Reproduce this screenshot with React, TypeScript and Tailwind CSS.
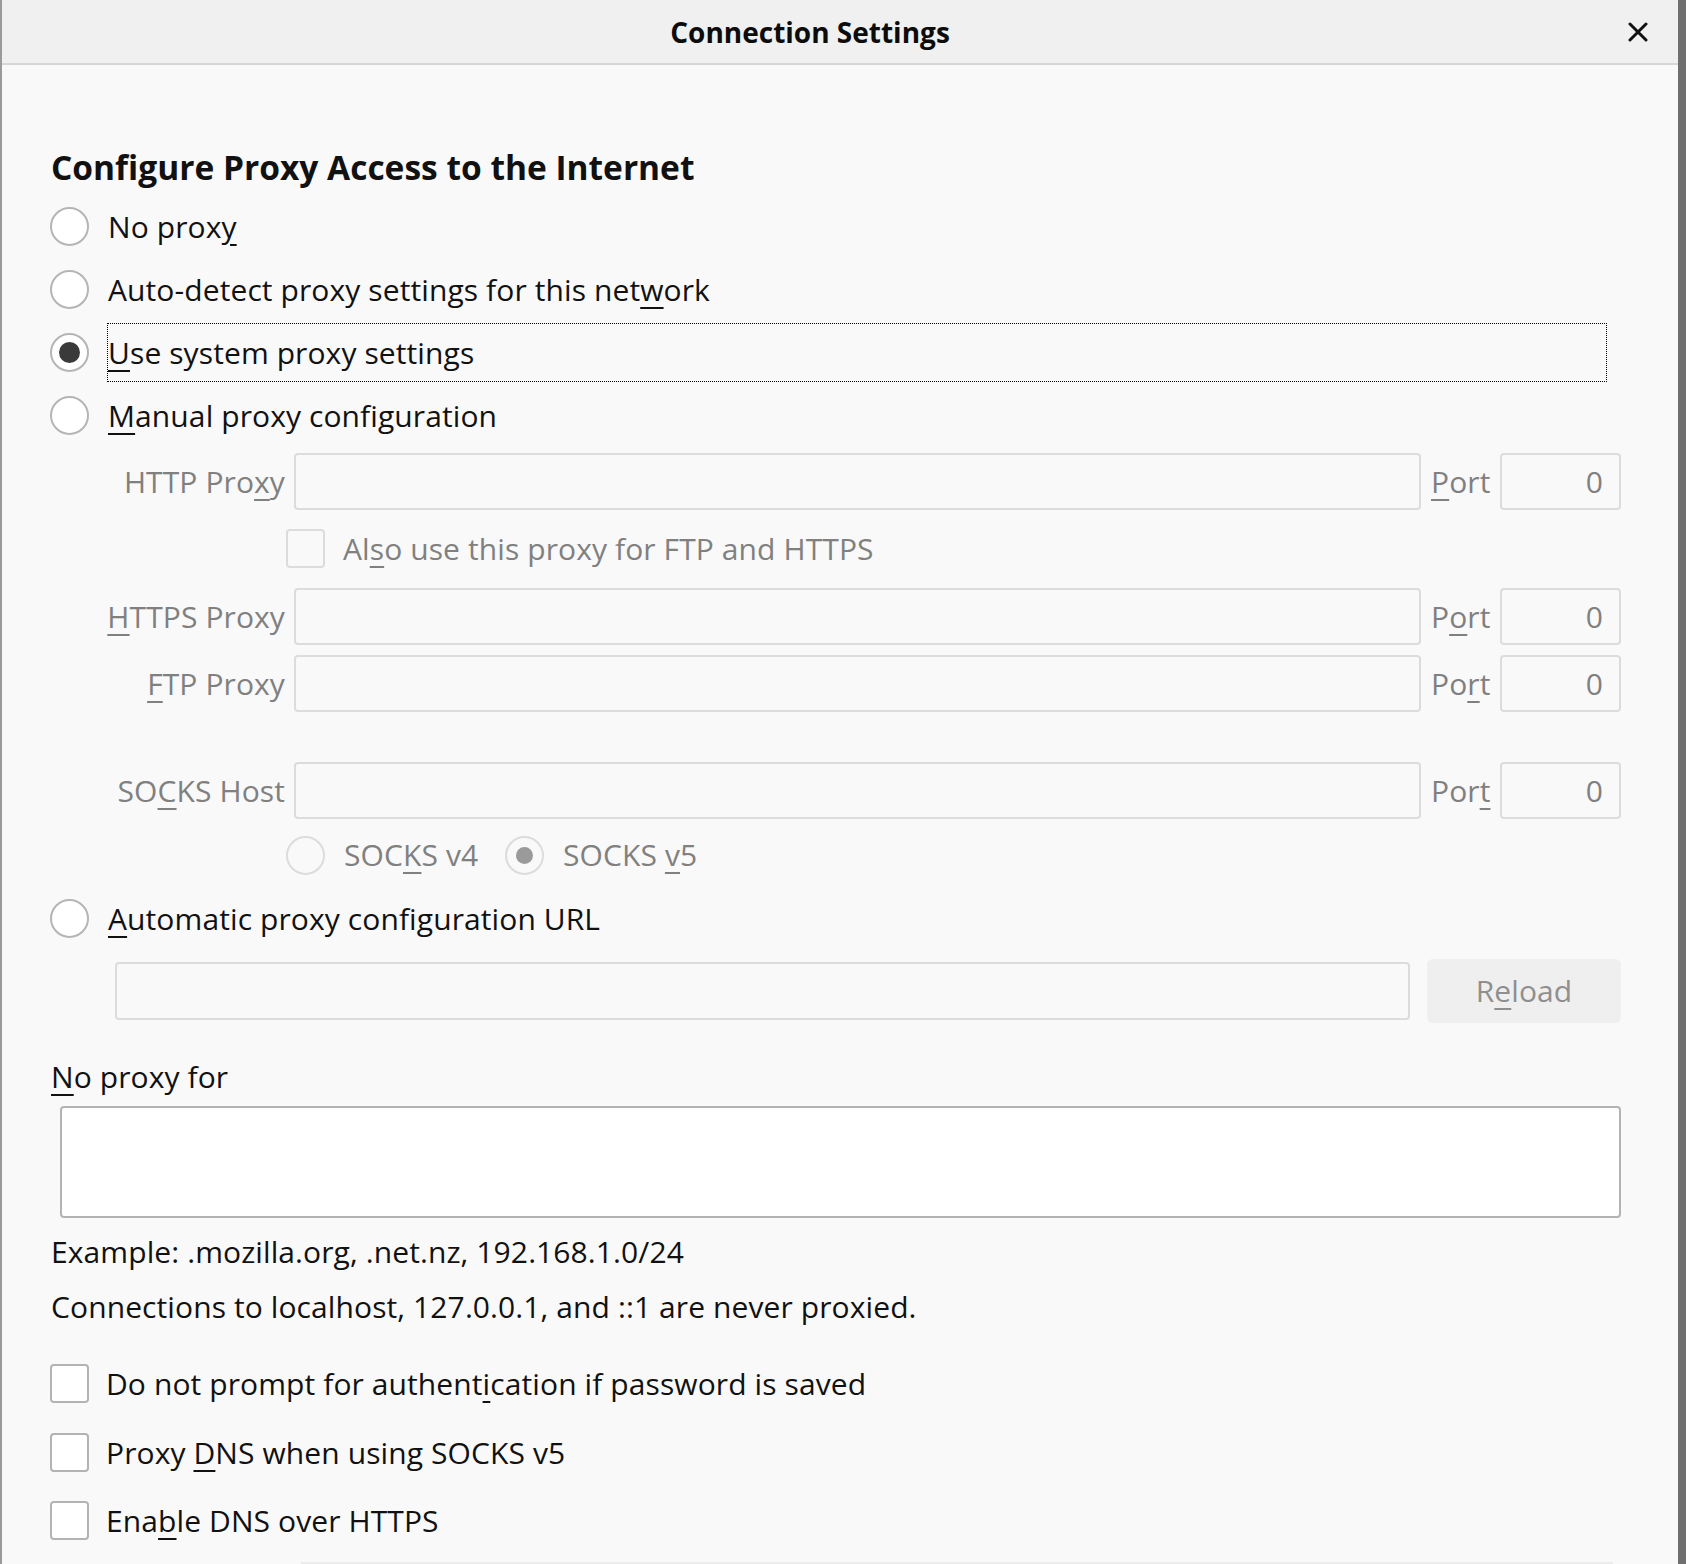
import React from 'react';

const FONT = { fontFamily: '"Open Sans", Lato, "Noto Sans", sans-serif' };

const U: React.FC<{ children: React.ReactNode }> = ({ children }) => (
    <span className="underline decoration-[2px] underline-offset-[6px]">{children}</span>
);

const Radio: React.FC<{ checked?: boolean; disabled?: boolean }> = ({ checked, disabled }) => (
    <span
        className={`flex items-center justify-center w-[39px] h-[39px] shrink-0 rounded-full border-2 ${
            disabled ? 'border-[#dcdcdc] bg-[#f9f9f9]' : 'border-[#b5b5b5] bg-white'
        }`}
    >
        {checked && (
            <span className={`rounded-full ${disabled ? 'w-[17px] h-[17px] bg-[#9a9a9a]' : 'w-[21px] h-[21px] bg-[#3a3a3a]'}`} />
        )}
    </span>
);

const Checkbox: React.FC<{ disabled?: boolean }> = ({ disabled }) => (
    <span
        className={`block w-[39px] h-[39px] shrink-0 rounded-[4px] border-2 ${
            disabled ? 'border-[#dcdcdc] bg-[#f9f9f9]' : 'border-[#b3b3b3] bg-white'
        }`}
    />
);

const Field: React.FC<{ label: React.ReactNode; port: React.ReactNode; className?: string }> = ({ label, port, className }) => (
    <div className={`flex items-center h-[57px] text-[#808080] ${className ?? ''}`}>
        <div className="w-[244px] pr-[9px] text-right whitespace-nowrap">{label}</div>
        <div className="flex-1 h-[57px] rounded-[4px] border-2 border-[#dcdcdc] bg-[#f9f9f9]" />
        <div className="w-[79px] pl-[10px] whitespace-nowrap">{port}</div>
        <div className="w-[121px] h-[57px] rounded-[4px] border-2 border-[#dcdcdc] bg-[#f9f9f9] flex items-center justify-end pr-[16px]">0</div>
    </div>
);

const RadioRow: React.FC<{ children: React.ReactNode; checked?: boolean }> = ({ children, checked }) => (
    <div className="flex items-center h-[63px]">
        <Radio checked={checked} />
        <span className="ml-[19px] whitespace-nowrap">{children}</span>
    </div>
);

const CheckRow: React.FC<{ children: React.ReactNode; className?: string }> = ({ children, className }) => (
    <div className={`flex items-center h-[39px] ${className ?? ''}`}>
        <Checkbox />
        <span className="ml-[17px] whitespace-nowrap">{children}</span>
    </div>
);

export default function App() {
    return (
        <div
            className="flex w-[1686px] h-[1564px] overflow-hidden bg-[#f9f9f9] text-[30px] tracking-[0.1px] leading-[40px] text-[#111]"
            style={FONT}
        >
            <div className="w-[2px] bg-[#9a9a9a]" />
            <div className="flex-1 flex flex-col">
                <div className="flex items-center h-[65px] bg-[#f0f0f0] border-b-2 border-[#d6d5da] shrink-0">
                    <div className="flex-1 flex justify-center pr-[10px]">
                        <span className="text-[28px] tracking-normal font-bold text-[#0c0c0c]">Connection Settings</span>
                    </div>
                    <svg width="20" height="20" viewBox="0 0 20 20" className="mr-[30px]">
                        <path d="M2 2 L18 18 M18 2 L2 18" stroke="#111" strokeWidth="3" strokeLinecap="round" />
                    </svg>
                </div>

                <div className="flex flex-col pl-[48px] pr-[57px]">
                    <h1 className="mt-[82px] h-[40px] text-[33.5px] tracking-normal font-bold pl-[1px] whitespace-nowrap">
                        Configure Proxy Access to the Internet
                    </h1>

                    <div className="mt-[8px]">
                        <RadioRow>No prox<U>y</U></RadioRow>
                        <RadioRow>Auto-detect proxy settings for this net<U>w</U>ork</RadioRow>
                        <div className="flex items-center h-[63px]">
                            <Radio checked />
                            <span className="ml-[18px] mr-[14px] flex-1 flex items-center h-[59px] border border-dotted border-black whitespace-nowrap">
                                <U>U</U>se system proxy settings
                            </span>
                        </div>
                        <RadioRow><U>M</U>anual proxy configuration</RadioRow>
                    </div>

                    <Field className="mt-[6px]" label={<>HTTP Pro<U>x</U>y</>} port={<><U>P</U>ort</>} />
                    <div className="flex items-center h-[39px] mt-[19px] pl-[236px] text-[#808080]">
                        <Checkbox disabled />
                        <span className="ml-[18px] whitespace-nowrap">Al<U>s</U>o use this proxy for FTP and HTTPS</span>
                    </div>
                    <Field className="mt-[20px]" label={<><U>H</U>TTPS Proxy</>} port={<>P<U>o</U>rt</>} />
                    <Field className="mt-[10px]" label={<><U>F</U>TP Proxy</>} port={<>Po<U>r</U>t</>} />
                    <Field className="mt-[50px]" label={<>SO<U>C</U>KS Host</>} port={<>Por<U>t</U></>} />
                    <div className="flex items-center h-[38px] mt-[17px] pl-[236px] text-[#808080]">
                        <Radio disabled />
                        <span className="ml-[19px] w-[161px] whitespace-nowrap">SOC<U>K</U>S v4</span>
                        <Radio checked disabled />
                        <span className="ml-[19px] whitespace-nowrap">SOCKS <U>v</U>5</span>
                    </div>

                    <div className="flex items-center h-[39px] mt-[25px]">
                        <Radio />
                        <span className="ml-[19px] whitespace-nowrap"><U>A</U>utomatic proxy configuration URL</span>
                    </div>

                    <div className="flex items-center h-[64px] mt-[21px] pl-[65px]">
                        <div className="flex-1 h-[58px] rounded-[4px] border-2 border-[#dcdcdc] bg-[#f9f9f9]" />
                        <button className="ml-[17px] w-[194px] h-[64px] rounded-[6px] bg-[#efefef] text-[#8f8f8f]">
                            R<U>e</U>load
                        </button>
                    </div>

                    <div className="mt-[34px] h-[40px] pl-[1px]"><U>N</U>o proxy for</div>
                    <div className="mt-[9px] ml-[10px] h-[112px] rounded-[4px] border-2 border-[#b3b3b3] bg-white" />
                    <div className="mt-[14px] h-[40px] pl-[1px] whitespace-nowrap">Example: .mozilla.org, .net.nz, 192.168.1.0/24</div>
                    <div className="mt-[15px] h-[40px] pl-[1px] whitespace-nowrap">Connections to localhost, 127.0.0.1, and ::1 are never proxied.</div>

                    <CheckRow className="mt-[37px]">Do not prompt for authent<U>i</U>cation if password is saved</CheckRow>
                    <CheckRow className="mt-[30px]">Proxy <U>D</U>NS when using SOCKS v5</CheckRow>
                    <CheckRow className="mt-[29px]">Ena<U>b</U>le DNS over HTTPS</CheckRow>

                    <div className="mt-[22px] ml-[251px] mr-[8px] h-[2px] bg-[#ececec]" />
                </div>
            </div>
            <div className="w-[8px] bg-[#6f6f6f]" />
        </div>
    );
}
